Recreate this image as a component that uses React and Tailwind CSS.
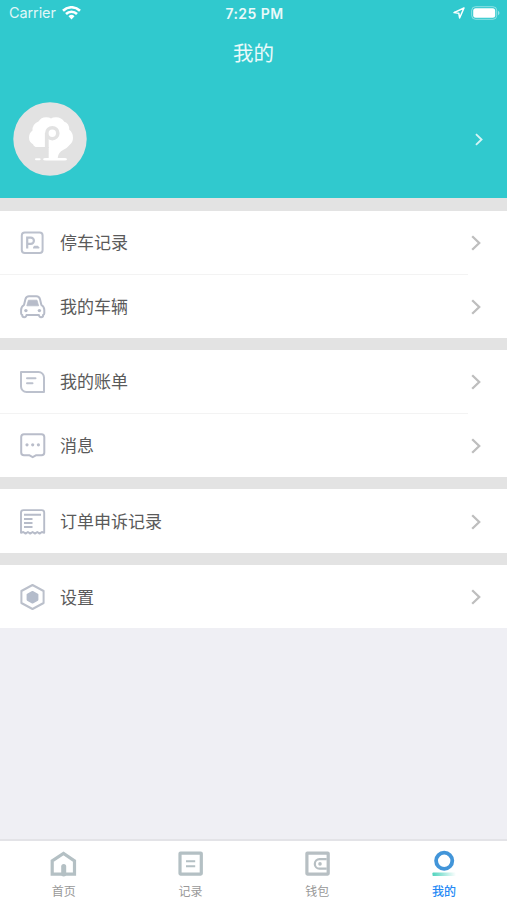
import clsx from "clsx";

const ParkingIcon = () => (
  <svg width="28" height="28" viewBox="0 0 28 28" fill="none" stroke="#bcc1cd">
    <rect x="3.8" y="3.5" width="20.8" height="20.4" rx="3" strokeWidth="2" />
    <path d="M9.2 19.5V8.7h3.6a3 3 0 0 1 0 6.2H9.2" strokeWidth="2.2" />
    <path d="M15 19.6v-1.4l1.3-1.4h3.6l1.3 1.4v1.4z" fill="#bcc1cd" stroke="none" />
  </svg>
);

const CarIcon = () => (
  <svg width="28" height="28" viewBox="0 0 28 28" fill="none" stroke="#b7bcc9">
    <path
      d="M6 12 7.4 6.2Q8.2 3.2 11 3.2h7.400q2.800 0 3.600 3L23.400 12Q26.300 13.700 26.300 17v3.300q0 1.400-1.200 1.600v.6q0 1.700-2 1.700t-2.200-2.200H8.500q-.2 2.200-2.200 2.200t-2-1.700v-.6q-1.200-.2-1.200-1.600V17q0-3.300 2.900-5z"
      strokeWidth="2"
      strokeLinejoin="round"
    />
    <path d="M10.400 7.200h8.600l1.600 5.600H8.800z" fill="#b7bcc9" strokeWidth=".8" />
    <circle cx="7.900" cy="17.600" r="1.700" fill="#b7bcc9" stroke="none" />
    <circle cx="21.400" cy="17.600" r="1.700" fill="#b7bcc9" stroke="none" />
  </svg>
);

const BillIcon = () => (
  <svg width="28" height="28" viewBox="0 0 28 28" fill="none" stroke="#bcc1cd" strokeWidth="2">
    <path d="M3 4h17.5a5.5 5.5 0 0 1 5.5 5.5V24H8.500A5.500 5.500 0 0 1 3 18.500z" strokeLinejoin="round" />
    <path d="M9 10.300h8.500M9 15.300h5.500" strokeLinecap="round" />
  </svg>
);

const MessageIcon = () => (
  <svg width="28" height="28" viewBox="0 0 28 28" fill="none" stroke="#b9bdca">
    <path
      d="M6 2.300h17.500q2.800 0 2.800 2.800v15.300q0 2.800-2.800 2.800h-5.200l-3.600 2-3.600-2H6q-2.800 0-2.800-2.800V5.100Q3.200 2.300 6 2.300z"
      strokeWidth="2"
      strokeLinejoin="round"
    />
    <g fill="#b9bdca" stroke="none">
      <circle cx="9" cy="12.800" r="1.600" />
      <circle cx="14.700" cy="12.800" r="1.600" />
      <circle cx="20.400" cy="12.800" r="1.600" />
    </g>
  </svg>
);

const OrderIcon = () => (
  <svg width="28" height="28" viewBox="0 0 28 28" fill="none" stroke="#b7bcc9">
    <path
      d="M3 24.800V4.600Q3 2.100 5.500 2.100h18.200Q26.200 2.100 26.200 4.600v20.200l-2.300-.8-2.300 1.600-2.300-1.600-2.300 1.600-2.400-1.600-2.400 1.600-2.300-1.600-2.300 1.600-2.300-1.600z"
      strokeWidth="1.900"
      strokeLinejoin="round"
    />
    <path d="M6 6.800h17M6 11h8.500M6 15h8.500M6 19h8.500" strokeWidth="2" />
  </svg>
);

const SettingsIcon = () => (
  <svg width="28" height="28" viewBox="0 0 28 28" fill="none" stroke="#bbc0cb" strokeLinejoin="round">
    <path d="M14.500 2 25.600 8v12L14.500 26 3.400 20V8z" strokeWidth="2" />
    <path d="m14.500 9 4.900 2.600v5.200L14.500 19.500l-4.900-2.700v-5.200z" fill="#b4bccb" stroke="#b4bccb" strokeWidth="2" />
  </svg>
);

const HomeTabIcon = () => (
  <svg width="28" height="28" viewBox="0 0 28 28" fill="none" stroke="#b4c0c4" strokeWidth="3.200">
    <path d="M3.200 24.200V10.800L14.500 3.400l11 7.400v13.400z" />
    <path d="M14.700 24v-7.500" strokeWidth="5" strokeLinecap="round" />
  </svg>
);

const RecordTabIcon = () => (
  <svg width="28" height="28" viewBox="0 0 28 28" fill="none" stroke="#b4c0c4" strokeWidth="3.200">
    <rect x="4" y="3.100" width="21.300" height="21" rx=".5" />
    <path d="M10 11.300h9.200M10 16.300h9.200" strokeWidth="2" />
  </svg>
);

const WalletTabIcon = () => (
  <svg width="28" height="28" viewBox="0 0 28 28" fill="none" stroke="#b7bfc3" strokeWidth="3.200">
    <rect x="3.900" y="3.100" width="21.300" height="21" rx=".5" />
    <path d="M23.700 9.200h-7.200a4.600 4.600 0 0 0 0 9.400h7.200" strokeWidth="2.200" />
    <circle cx="17" cy="13.900" r="1.800" fill="#b7bfc3" stroke="none" />
  </svg>
);

const MineTabIcon = () => (
  <svg width="28" height="28" viewBox="0 0 28 28" fill="none">
    <defs>
      <linearGradient id="mine-base">
        <stop offset="0" stopColor="#4fd3bd" />
        <stop offset="1" stopColor="#4fd3bd" stopOpacity="0" />
      </linearGradient>
    </defs>
    <circle cx="14.200" cy="10.800" r="8.100" stroke="#4295d9" strokeWidth="3.800" />
    <rect x="2.500" y="22.400" width="23.500" height="3.700" rx=".8" fill="url(#mine-base)" />
  </svg>
);

const SECTIONS = [
  {
    height: "h-[127px]",
    items: [
      { label: "停车记录", icon: ParkingIcon },
      { label: "我的车辆", icon: CarIcon },
    ],
  },
  {
    height: "h-[127px]",
    items: [
      { label: "我的账单", icon: BillIcon },
      { label: "消息", icon: MessageIcon },
    ],
  },
  { height: "h-16", items: [{ label: "订单申诉记录", icon: OrderIcon }] },
  { height: "h-[63px]", items: [{ label: "设置", icon: SettingsIcon }] },
];

const TABS = [
  { label: "首页", icon: HomeTabIcon },
  { label: "记录", icon: RecordTabIcon },
  { label: "钱包", icon: WalletTabIcon },
  { label: "我的", icon: MineTabIcon, active: true },
];

function StatusBar() {
  return (
    <div className="grid h-[26px] grid-cols-3 items-center pl-[9px] pr-[7px] text-white">
      <div className="flex items-center gap-1.5">
        <span className="text-[14.5px] tracking-[-0.1px] opacity-85">Carrier</span>
        <svg width="19" height="14" viewBox="0 0 19 14" fill="none" stroke="white" strokeWidth="2.600">
          <path d="M1 4.700a12.200 12.200 0 0 1 17 0" />
          <path d="M4 8a7.900 7.900 0 0 1 11 0" />
          <path d="m9.500 13.600-3-3.300a4.300 4.300 0 0 1 6 0z" fill="white" stroke="none" />
        </svg>
      </div>
      <span className="text-center text-[14px] font-semibold tracking-[0.45px] opacity-90">7:25 PM</span>
      <div className="flex items-center justify-end gap-1.5">
        <svg width="12" height="12" viewBox="0 0 12 12" fill="none" stroke="white" strokeWidth="1.500" strokeLinejoin="round">
          <path d="M11 1 1 5.600l4.800.600L6.600 11z" />
        </svg>
        <svg width="29" height="14" viewBox="0 0 29 14">
          <rect x=".7" y=".7" width="25" height="12.600" rx="3.800" fill="none" stroke="white" strokeOpacity=".45" />
          <rect x="2.200" y="2.200" width="22" height="9.600" rx="2.500" fill="white" />
          <path d="M27 4.800q1.500.7 1.500 2.200T27 9.200z" fill="white" fillOpacity=".5" />
        </svg>
      </div>
    </div>
  );
}

function Avatar() {
  return (
    <svg width="74" height="74" viewBox="0 0 74 74">
      <circle cx="37" cy="37" r="36.700" fill="#e2e2e2" />
      {/* Tree crown and trunk */}
      <path
        d="M24 45q-3 0-4-2.800-4-1.800-4-6.700 0-4.500 3.500-7-.3-6.500 6-9 2.500-4.300 7.500-4.300 3.500 0 5 1.300 1.500-1.300 5-1.300 5.500 0 8.300 4.500 5 1.300 5 8 3.700 3 3.700 7.800 0 5-3.500 7.500-2.500 3.300-6 4.800-5.500 2.700-5.800 8.200h6.800q2.500 0 2.500 1.200t-2.500 1.200H33q-3 0-3-1.200T33 56h2.700V45z"
        fill="white"
      />
      {/* P cut out of the crown */}
      <path d="M33.800 46V31" stroke="#e2e2e2" strokeWidth="3.800" />
      <circle cx="39.300" cy="31.200" r="5.500" fill="white" stroke="#e2e2e2" strokeWidth="3.600" />
      <path d="M23 57.200h3.600" stroke="white" strokeWidth="2" strokeLinecap="round" />
    </svg>
  );
}

const Chevron = ({ className }) => (
  <svg className={className} viewBox="0 0 10 16" fill="none" stroke="currentColor" strokeWidth="2.300">
    <path d="m1.200 1.200 7 6.800-7 6.800" />
  </svg>
);

function MenuRow({ label, icon: Icon, divided }) {
  return (
    <div className="flex flex-1 flex-col">
      <div className="flex flex-1 items-center pt-px pl-[18px] pr-[26px]">
        <Icon />
        <span className="ml-[14px] flex-1 pt-px text-[17px] leading-6 text-[#5a5a5a]">{label}</span>
        <Chevron className="h-4 w-2.5 text-[#bebebe]" />
      </div>
      {divided && <div className="mr-[39px] h-px bg-[#f3f3f3]" />}
    </div>
  );
}

export default function App() {
  return (
    <div className="flex h-[900px] w-[507px] flex-col overflow-hidden bg-[#efeff4] font-['Inter','Noto_Sans_CJK_SC',sans-serif]">
      <header className="flex h-[198px] flex-col bg-[#30c9ce]">
        <StatusBar />
        <h1 className="mt-3 text-center text-[20.5px] leading-8 text-white/90">我的</h1>
        <div className="mt-8 flex items-center justify-between pl-[13px] pr-6">
          <Avatar />
          <Chevron className="h-[13px] w-2 text-white/80" />
        </div>
      </header>

      <main className="flex flex-col gap-3 bg-[#e3e3e3] pt-[13px]">
        {SECTIONS.map(({ height, items }) => (
          <section key={items[0].label} className={clsx("flex flex-col bg-white", height)}>
            {items.map((item, i) => (
              <MenuRow key={item.label} {...item} divided={i < items.length - 1} />
            ))}
          </section>
        ))}
      </main>

      <nav className="mt-auto grid h-[61px] grid-cols-4 border-t-2 border-[#e3e3e7] bg-white pt-[9px]">
        {TABS.map(({ label, icon: Icon, active }) => (
          <div key={label} className="flex flex-col items-center">
            <Icon />
            <span
              className={clsx(
                "mt-[5px] pl-px text-[12px] leading-[18px]",
                active ? "font-medium text-[#2589f5]" : "text-[#999]"
              )}
            >
              {label}
            </span>
          </div>
        ))}
      </nav>
    </div>
  );
}
